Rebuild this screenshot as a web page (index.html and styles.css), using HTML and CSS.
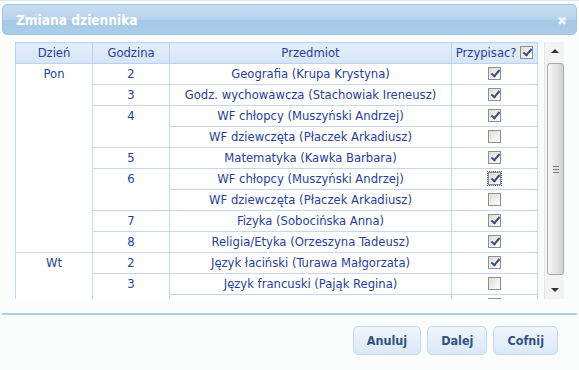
FILE: index.html
```html
<!DOCTYPE html>
<html lang="pl">
 <head>
   <title>Zmiana dziennika</title>
   <meta charset="utf-8">
   <link rel="stylesheet" href="styles.css">
 </head>
 <body>
  <div id="dialog">
    <div id="titlebar"><span class="title">Zmiana dziennika</span><span class="close">&#x2716;</span></div>

    <div id="content">
      <div id="grid">
        <table>
          <thead>
            <tr>
              <th class="c-day">Dzień</th>
              <th class="c-hour">Godzina</th>
              <th class="c-subj">Przedmiot</th>
              <th class="c-chk">Przypisac? <span class="cb on"></span></th>
            </tr>
          </thead>
          <tbody>
            <tr><td rowspan="9">Pon</td><td>2</td><td>Geografia (Krupa Krystyna)</td><td><span class="cb on"></span></td></tr>
            <tr><td>3</td><td>Godz. wychowawcza (Stachowiak Ireneusz)</td><td><span class="cb on"></span></td></tr>
            <tr><td rowspan="2">4</td><td>WF chłopcy (Muszyński Andrzej)</td><td><span class="cb on"></span></td></tr>
            <tr><td>WF dziewczęta (Płaczek Arkadiusz)</td><td><span class="cb"></span></td></tr>
            <tr><td>5</td><td>Matematyka (Kawka Barbara)</td><td><span class="cb on"></span></td></tr>
            <tr><td rowspan="2">6</td><td>WF chłopcy (Muszyński Andrzej)</td><td><span class="cb on focus"></span></td></tr>
            <tr><td>WF dziewczęta (Płaczek Arkadiusz)</td><td><span class="cb"></span></td></tr>
            <tr><td>7</td><td>Fizyka (Sobocińska Anna)</td><td><span class="cb on"></span></td></tr>
            <tr><td>8</td><td>Religia/Etyka (Orzeszyna Tadeusz)</td><td><span class="cb on"></span></td></tr>
            <tr><td rowspan="4">Wt</td><td>2</td><td>Język łaciński (Turawa Małgorzata)</td><td><span class="cb on"></span></td></tr>
            <tr><td rowspan="2">3</td><td>Język francuski (Pająk Regina)</td><td><span class="cb"></span></td></tr>
            <tr><td>Język niemiecki (Kozłowska Jadwiga)</td><td><span class="cb"></span></td></tr>
            <tr><td>4</td><td>Historia (Nowak Piotr)</td><td><span class="cb on"></span></td></tr>
          </tbody>
        </table>
      </div>
      <div id="scrollbar">
        <div class="arrow up"></div>
        <div class="thumb"><span class="grip"></span></div>
        <div class="arrow down"></div>
      </div>
    </div>

    <div id="footer">
      <button>Anuluj</button>
      <button>Dalej</button>
      <button>Cofnij</button>
    </div>
  </div>
 </body>
</html>
```

FILE: styles.css
```css
html, body {
  margin: 0;
  padding: 0;
  height: 100%;
  background-color: #fbfcfc;
}

#dialog {
  height: 100%;
  box-sizing: border-box;
  border-top: 1px solid #dfe7ee;
  padding: 3px 2px 0;
  font-family: "DejaVu Sans Condensed", "DejaVu Sans", sans-serif;
  font-size: 12.9px;
}

#titlebar {
  display: flex;
  align-items: center;
  justify-content: space-between;
  height: 29px;
  padding: 0 9px 0 13px;
  border: 1px solid #a3c4e0;
  border-radius: 5px;
  background: linear-gradient(#c6ddf0, #b6d3ec 50%, #a4c8e6 51%, #abcde9);
}

.title {
  color: #ffffff;
  font-weight: bold;
  font-size: 13.6px;
  padding-top: 1px;
}

.close {
  color: #eef4fa;
  font-family: "DejaVu Sans", sans-serif;
  font-size: 12px;
  font-weight: bold;
  padding-top: 2px;
}

#content {
  display: flex;
  height: 257px;
  margin: 7px 0 0 13px;
}

#grid {
  width: 523px;
  overflow: hidden;
}

table {
  width: 100%;
  border-collapse: collapse;
  color: #263f9f;
  table-layout: fixed;
}

th, td {
  border: 1px solid #c5d7ef;
  height: 20px;
  padding: 0;
  text-align: center;
  vertical-align: top;
  line-height: 20px;
  white-space: nowrap;
  overflow: hidden;
}

th {
  font-weight: normal;
  background: linear-gradient(#e4eefa, #d6e6f7);
  border-color: #bcd3ef;
}

td {
  background-color: #ffffff;
}

.c-day { width: 76px; }
.c-hour { width: 76px; }
.c-subj { width: 281px; }
.c-chk { width: auto; }

.cb {
  display: inline-block;
  box-sizing: border-box;
  width: 13px;
  height: 13px;
  vertical-align: -2px;
  border: 1px solid #8e9090;
  background: linear-gradient(135deg, #dcdcd6, #ffffff);
  position: relative;
}

.cb.on::after {
  content: "";
  position: absolute;
  left: 4px;
  top: 0px;
  width: 3px;
  height: 7px;
  border: solid #3b4d84;
  border-width: 0 2px 2px 0;
  transform: rotate(40deg);
}

.cb.focus {
  outline: 1px dotted #555555;
  outline-offset: 0;
}

#scrollbar {
  display: flex;
  flex-direction: column;
  width: 19px;
  margin-left: 6px;
  background-color: #f3f3f3;
  border-left: 1px solid #e6e6e6;
}

.arrow {
  height: 20px;
  position: relative;
}

.arrow::after {
  content: "";
  position: absolute;
  left: 6px;
  width: 0;
  height: 0;
  border-left: 4px solid transparent;
  border-right: 4px solid transparent;
}

.arrow.up::after {
  top: 7px;
  border-bottom: 4px solid #333333;
}

.arrow.down::after {
  top: 9px;
  border-top: 4px solid #333333;
}

.thumb {
  flex: 1;
  margin: 1px 0 4px 2px;
  border: 1px solid #a9a9a9;
  border-radius: 3px;
  background: linear-gradient(90deg, #f7f7f7, #e2e2e2 60%, #cfcfcf);
  display: flex;
  align-items: center;
  justify-content: center;
}

.grip {
  width: 6px;
  height: 5px;
  border-top: 1px solid #777777;
  border-bottom: 1px solid #777777;
  position: relative;
}

.grip::after {
  content: "";
  position: absolute;
  left: 0;
  right: 0;
  top: 2px;
  border-top: 1px solid #777777;
}

#footer {
  display: flex;
  justify-content: flex-end;
  gap: 6px;
  margin-top: 14px;
  padding: 11px 19px 0 0;
  border-top: 2px solid #b6cde2;
}

button {
  height: 29px;
  padding: 0 13px;
  font-family: "DejaVu Sans Condensed", "DejaVu Sans", sans-serif;
  font-size: 12.5px;
  font-weight: bold;
  color: #33527c;
  border: 1px solid #c3d8ec;
  border-radius: 5px;
  background: linear-gradient(#eef5fc, #dbe9f7);
}
```
